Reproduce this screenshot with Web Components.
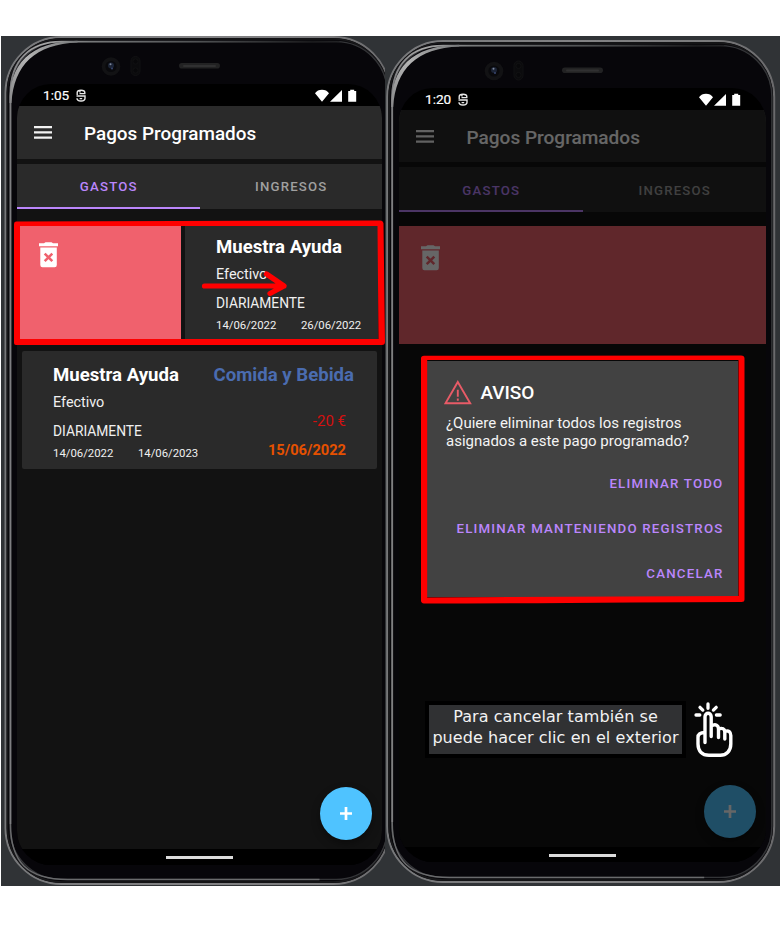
<!DOCTYPE html>
<html lang="es">
<head>
<meta charset="utf-8">
<title>Pagos Programados</title>
<style>
  body { margin: 0; background: #fff; font-family: Roboto, "Liberation Sans", sans-serif; color: #fff; }
</style>
</head>
<body>
<help-board>
  <phone-shell kind="left">
    <status-bar time="1:05"></status-bar>
    <app-view>
      <app-bar>Pagos Programados</app-bar>
      <tab-strip></tab-strip>
      <swipe-row><payment-card name="Muestra Ayuda" account="Efectivo" every="DIARIAMENTE" from="14/06/2022" to="26/06/2022"></payment-card></swipe-row>
      <payment-card class="resting" name="Muestra Ayuda" account="Efectivo" every="DIARIAMENTE" from="14/06/2022" to="14/06/2023" category="Comida y Bebida" amount="-20 €" next="15/06/2022"></payment-card>
      <fab-button></fab-button>
    </app-view>
    <nav-bar></nav-bar>
    <swipe-marker slot="over"></swipe-marker>
  </phone-shell>
  <phone-shell kind="right">
    <status-bar time="1:20"></status-bar>
    <app-view dimmed>
      <app-bar>Pagos Programados</app-bar>
      <tab-strip></tab-strip>
      <swipe-row></swipe-row>
      <fab-button></fab-button>
    </app-view>
    <nav-bar></nav-bar>
    <alert-dialog slot="over">
      <span slot="title">AVISO</span>
      ¿Quiere eliminar todos los registros<br>asignados a este pago programado?
      <dialog-action slot="actions">ELIMINAR TODO</dialog-action>
      <dialog-action slot="actions">ELIMINAR MANTENIENDO REGISTROS</dialog-action>
      <dialog-action slot="actions">CANCELAR</dialog-action>
    </alert-dialog>
    <tap-hint slot="over">Para cancelar también se<br>puede hacer clic en el exterior</tap-hint>
  </phone-shell>
</help-board>

<script>
function element(name, render) {
  customElements.define(name, class extends HTMLElement {
    constructor() { super(); this.attachShadow({ mode: 'open' }); }
    connectedCallback() { this.shadowRoot.innerHTML = render(this); }
  });
}

element('help-board', () => `
<style>
:host { display: grid; grid-template-columns: 384px 395px; height: 850px; padding: 36px 0 42px 1px; }
</style><slot></slot>`);

/* Outline of the device: metal rim, black bezel, corner highlight. */
function rim(o) {
  const { x, y, w, h, r } = o, b = y + h, e = x + w;
  return `
  <defs>
    <linearGradient id="m" x1="0" y1="0" x2="1" y2="0"><stop offset="0" stop-color="#77787a"/><stop offset=".5" stop-color="#828284"/><stop offset=".82" stop-color="#7a7a7c"/><stop offset="1" stop-color="#6a6a6c"/></linearGradient>
    <linearGradient id="hi" gradientUnits="userSpaceOnUse" x1="${x}" y1="0" x2="${e}" y2="0"><stop offset="0" stop-color="#77777a"/><stop offset=".09" stop-color="#a8a8a8"/><stop offset=".22" stop-color="#77797a"/><stop offset=".5" stop-color="#505254"/><stop offset=".8" stop-color="#1a1a1c"/><stop offset="1" stop-color="#1a1a1c" stop-opacity="0"/></linearGradient>
    <linearGradient id="cr" gradientUnits="userSpaceOnUse" x1="${x}" y1="${y + 75}" x2="${x + 75}" y2="${y}"><stop offset="0" stop-color="#808082"/><stop offset=".5" stop-color="#b4b4b4"/><stop offset="1" stop-color="#707274"/></linearGradient>
  </defs>
  <rect x="${x}" y="${y}" width="${w}" height="${h}" rx="${r}" fill="#07060a" stroke="url(#m)" stroke-width="2"/>
  <rect x="${x + 2}" y="${y + 2}" width="${w - 4}" height="${h - 4}" rx="${r - 2}" fill="none" stroke="#18181a" stroke-width="1.6"/>
  <rect x="${x + 4.6}" y="${y + 4.6}" width="${w - 7}" height="${h - 9.2}" rx="${r - 5}" fill="none" stroke="#343538" stroke-width="1.3"/>
  <path d="M${x + 5} ${b - r - 4}V${y + r}C${x + 5} ${y + 24} ${x + 24} ${y + 4.6} ${x + r} ${y + 4.6}H${e - 50}" fill="none" stroke="url(#hi)" stroke-width="1.8"/>
  <path d="M${x + 4} ${y + 66}C${x + 3.5} ${y + 28} ${x + 24} ${y + 4.5} ${x + r + 16} ${y + 3.8}L${x + r + 16} ${y + 5.5}C${x + 30} ${y + 7} ${x + 8} ${y + 28} ${x + 6} ${y + 66}Z" fill="url(#cr)"/>
  <path d="M${x + 5} ${b - r - 4}C${x + 5} ${b - 22} ${x + 22} ${b - 4.6} ${x + r + 6} ${b - 4.6}H${e - 70}" fill="none" stroke="#6a6b6d" stroke-width="1.5"/>
  `;
}
element('phone-shell', el => {
  const left = el.getAttribute('kind') === 'left';
  const o = left ? { x: 4.5, y: 1, w: 384, h: 847, r: 56 } : { x: 2.2, y: 5, w: 387, h: 841, r: 56 };
  const cam = left ? [110, 30.5] : [109, 35];
  const sp = left ? [178, 27] : [177, 31.5];
  return `
<style>
:host { display: block; position: relative; overflow: hidden; box-sizing: border-box; height: 850px; background: #303336;
  padding: ${left ? '48px 3px 0 16px' : '52px 14px 0 14px'}; --wide: ${left ? '365px' : '367px'};
  --bar: ${left ? '53px' : '52px'}; --view: ${left ? '743px' : '737px'}; --nav: ${left ? '16px' : '15px'}; --fab-r: 10px; --fab-b: 9.5px;
  --title: ${left ? '18.9px' : '19.05px'}; --title-gap: ${left ? '32px' : '32.5px'}; --title-top: ${left ? '1px' : '2px'}; --tab-top: ${left ? '0px' : '1px'}; }
svg { position: absolute; left: 0; top: 0; }
.screen { position: relative; width: var(--wide); border-radius: 34px; overflow: hidden; display: flex; flex-direction: column; background: #000; }
</style>
<svg width="396" height="850">${rim(o)}
  <circle cx="${cam[0]}" cy="${cam[1]}" r="9.3" fill="#121214"/><circle cx="${cam[0]}" cy="${cam[1]}" r="5.6" fill="#09090c"/>
  <circle cx="${cam[0]}" cy="${cam[1] - 1}" r="3" fill="#1c2436"/><circle cx="${cam[0] - 0.5}" cy="${cam[1] - 2.2}" r="1" fill="#7d879b"/><circle cx="${cam[0] + 1}" cy="${cam[1] + 2}" r="1" fill="#3a4770"/>
  <rect x="${cam[0] + 20}" y="${cam[1] - 10}" width="9" height="19" rx="4.5" fill="#0b0b0d" stroke="#111113"/>
  <circle cx="${cam[0] + 24.5}" cy="${cam[1] - 5}" r="2.6" fill="#08080a" stroke="#151517" stroke-width=".6"/><circle cx="${cam[0] + 24.5}" cy="${cam[1] + 4}" r="2.6" fill="#08080a" stroke="#151517" stroke-width=".6"/>
  <rect x="${sp[0]}" y="${sp[1]}" width="41" height="5.6" rx="2.8" fill="#222223"/><rect x="${sp[0] + 4}" y="${sp[1] + 2}" width="33" height="2" rx="1" fill="#303031"/>
</svg>
<div class="screen"><slot></slot></div>
<slot name="over"></slot>`;
});

element('status-bar', el => `
<style>
:host { display: flex; align-items: center; height: 22px; box-sizing: border-box; padding: 2px 25px 0 26px; font-size: 13.6px; font-weight: 400; }
span { width: 26px; margin-top: -2px; -webkit-text-stroke: .2px #fff; }
svg { display: block; } .app { margin: -2px 0 0 7px; } .sys { margin-left: auto; }
</style>
<span>${el.getAttribute('time')}</span>
<svg class="app" width="10" height="13" viewBox="0 0 10 13" fill="none" stroke="#e8e8e8" stroke-width="1.4"><path d="M1.2 6V3.5Q1.2 1.2 5 1.2T8.8 3.5V4.6H3.5M.5 7H9V9.3Q9 12 5 12T1 9.3M3.6 9.6H6.2M4 1.2V3.5"/></svg>
<svg class="sys" width="42" height="14" viewBox="0 0 42 14" fill="#fff"><path d="M0 4.2Q2.5 .8 7 .8T14 4.2L7 12.8ZM15 12.8 27 1v11.8zM33.2 2h2V.8h4V2h2v10.8h-8z"/></svg>`);

element('app-view', el => `
<style>
:host { display: flex; flex-direction: column; position: relative; height: var(--view); background: #121212; }
.scrim { position: absolute; inset: 0; background: rgba(0,0,0,.6); }
::slotted(fab-button) { position: absolute; right: var(--fab-r); bottom: var(--fab-b); }
::slotted(.resting) { margin: 10px 5px 0; }
</style><slot></slot>${el.hasAttribute('dimmed') ? '<div class="scrim"></div>' : ''}`);

element('app-bar', () => `
<style>
:host { display: flex; align-items: center; gap: var(--title-gap); height: var(--bar); padding-left: 17px; background: #2a2a2a; font-size: var(--title); font-weight: 500; }
svg { display: block; }
span { padding-top: var(--title-top); }
</style>
<svg width="18" height="13" viewBox="0 0 18 13" fill="#f2f2f2"><path d="M0 0h18v2.2H0zM0 5.3h18v2.2H0zM0 10.6h18v2.2H0z"/></svg><span><slot></slot></span>`);

element('tab-strip', () => `
<style>
:host { display: grid; grid-template-columns: 1fr 1fr; height: 45px; margin-top: 5px; background: #2a2a2a; font-size: 13.2px; font-weight: 500; letter-spacing: 1.2px; }
div { display: flex; align-items: center; justify-content: center; color: #a0a0a0; box-sizing: border-box; height: 45px; padding: var(--tab-top) 0 0 1px; }
.on { color: #bb86fc; box-shadow: inset 0 -2px #bb86fc; }
</style>
<div class="on">GASTOS</div><div>INGRESOS</div>`);

element('swipe-row', el => `
<style>
:host { display: flex; justify-content: space-between; height: 118px; margin-top: 14px; overflow: hidden; background: #121212; }
.bin { flex: none; width: ${el.children.length ? '164px' : '100%'}; box-sizing: border-box; padding: 19px 0 0 22px; background: #f0616d; }
.bin svg { display: block; }
.rest { flex: none; width: 193px; margin-right: 4px; overflow: hidden; }
</style>
<div class="bin"><svg width="19" height="26" viewBox="0 0 19 26"><path fill="#fff" d="M0 1.3h5L6.5 .2h6L14 1.3h5v3H0zM1.3 5.6h16.5v17.4q0 2.2-2.2 2.2H3.5q-2.2 0-2.2-2.2z"/><path d="M5.7 11.6l7.6 7.6M13.3 11.6l-7.6 7.6" stroke="#f0616d" stroke-width="2.5"/></svg></div>
${el.children.length ? '<div class="rest"><slot></slot></div>' : ''}`);

element('payment-card', el => {
  const a = n => el.getAttribute(n) || '';
  return `
<style>
:host { display: block; height: 118px; }
.card { display: flex; justify-content: space-between; height: 118px; box-sizing: border-box; padding: 12px 23px 0 31px; border-radius: 2px; background: #2a2a2a; white-space: nowrap; }
.name, .cat { font-size: 18.6px; line-height: 24px; font-weight: 700; }
.acc, .every { font-size: 14.4px; line-height: 18px; margin-top: 7px; color: #f0f0f0; }
.every { margin-top: 10px; font-size: 13.8px; }
.dates { display: flex; gap: 24.5px; margin-top: 6px; font-size: 11.35px; line-height: 14px; color: #f0f0f0; }
.right { text-align: right; }
.cat { color: #4a6cb0; }
.amount { margin: 25px 8px 0 0; font-size: 15px; line-height: 18px; color: #d5100f; }
.next { margin: 11px 8px 0 0; font-size: 14.65px; line-height: 18px; font-weight: 700; color: #e65100; }
</style>
<div class="card">
  <div><div class="name">${a('name')}</div><div class="acc">${a('account')}</div><div class="every">${a('every')}</div>
  <div class="dates"><span>${a('from')}</span><span>${a('to')}</span></div></div>
  ${a('category') ? `<div class="right"><div class="cat">${a('category')}</div><div class="amount">${a('amount')}</div><div class="next">${a('next')}</div></div>` : ''}
</div>`;
});

element('fab-button', () => `
<style>
:host { display: grid; place-items: center; width: 52px; height: 53px; border-radius: 50%; background: #4fc3ff; box-shadow: 0 4px 8px rgba(0,0,0,.35); }
</style><svg width="12" height="13" viewBox="0 0 12 13"><path d="M6 0v13M0 6.5h12" stroke="#fff" stroke-width="2.7"/></svg>`);

element('nav-bar', () => `
<style>
:host { display: flex; justify-content: center; height: var(--nav); background: #000; }
i { width: 67px; height: 2.5px; margin-top: 7px; background: #dcdcdc; }
</style><i></i>`);

element('swipe-marker', () => `
<style>
:host { position: absolute; left: 0; top: 180px; }
svg { display: block; }
</style><svg width="384" height="134" viewBox="1 216 384 134">
<path fill="#f00" fill-rule="evenodd" d="M16 221.5 380 220.5q3 0 3.5 3L385 342q0 3-3 3H16q-2 0-2-2V224q0-2.5 2-2.5zM20 226V339H378.5L377.5 226z"/>
<path d="M204.5 286H284M266.5 274l17.5 12-14 7.5" fill="none" stroke="#f00" stroke-width="5.2" stroke-linecap="round" stroke-linejoin="round"/></svg>`);

element('alert-dialog', () => `
<style>
:host { display: block; position: absolute; left: 42px; top: 325px; width: 311px; height: 236px; box-sizing: border-box; padding: 19px 14.5px 0 19px; background: #424242; }
.edge { position: absolute; left: -6px; top: -6px; }
.head { display: flex; align-items: center; gap: 8.4px; height: 25px; margin-left: -2px; font-size: 19px; font-weight: 500; }
.body { margin-top: 10px; font-size: 15px; line-height: 17.6px; color: #f4f4f4; white-space: nowrap; }
.actions { display: flex; flex-direction: column; align-items: flex-end; gap: 26.8px; margin-top: 25.3px; }
</style>
<svg class="edge" width="324" height="249"><path fill="#f00" fill-rule="evenodd" d="M3 .8 320 .5q3.5 0 3.5 3V244.5q0 2.5-3 2.5L210 247.5Q100 248.5 3 248.5 0 248 0 245.5V3.5Q0 1 3 .8zM6.2 5V242.5L317.5 241V5z"/></svg>
<div class="head"><svg width="28" height="25" viewBox="0 0 28 25" fill="none" stroke="#e85b67" stroke-width="1.9"><path d="M13.8 2 26.2 23.2H1.5z"/><path d="M13.8 9.7v7M13.8 18.5v2.2"/></svg><slot name="title"></slot></div>
<div class="body"><slot></slot></div>
<div class="actions"><slot name="actions"></slot></div>`);

element('dialog-action', () => `
<style>
:host { display: block; font-size: 13.3px; line-height: 18px; font-weight: 500; letter-spacing: 1.2px; color: #bb86fc; white-space: nowrap; }
</style><slot></slot>`);

element('tap-hint', () => `
<style>
:host { display: flex; gap: 8px; position: absolute; left: 40px; top: 665px; }
.note { width: 261px; height: 57px; box-sizing: border-box; padding-top: 1px; border: 4px solid #000; background: #303133; color: #f2f2f2; font: 16px/21px "DejaVu Sans", sans-serif; letter-spacing: .07px; text-align: center; white-space: nowrap; }
.hand { display: block; }
</style><div class="note"><slot></slot></div>
<svg class="hand" width="40" height="58" viewBox="0 0 40 58" fill="none" stroke="#fff" stroke-width="3.4" stroke-linecap="round" stroke-linejoin="round">
<path d="M14 3v4.3M6 6.3 8.8 9.1M22.2 6.3 19.4 9.1M2 14h3.8M22.4 14h3.8" stroke-width="3.3"/>
<path d="M11 41.5V15.7c0-4.6 6.2-4.6 6.2 0V35.5M17.2 25c4.5-2.8 7.3-.5 7.3 3v8.5M24.5 28c3.8-1.5 6.3 0 6.3 3v7M30.8 30.5c4-1.5 6 .5 6 4V43c0 7-4.5 11.3-10.5 11.3H15C8 54.3 4 50 4 43v-6.500C4 33 6.500 31.500 11 31.500"/></svg>`);
</script>
</body>
</html>
